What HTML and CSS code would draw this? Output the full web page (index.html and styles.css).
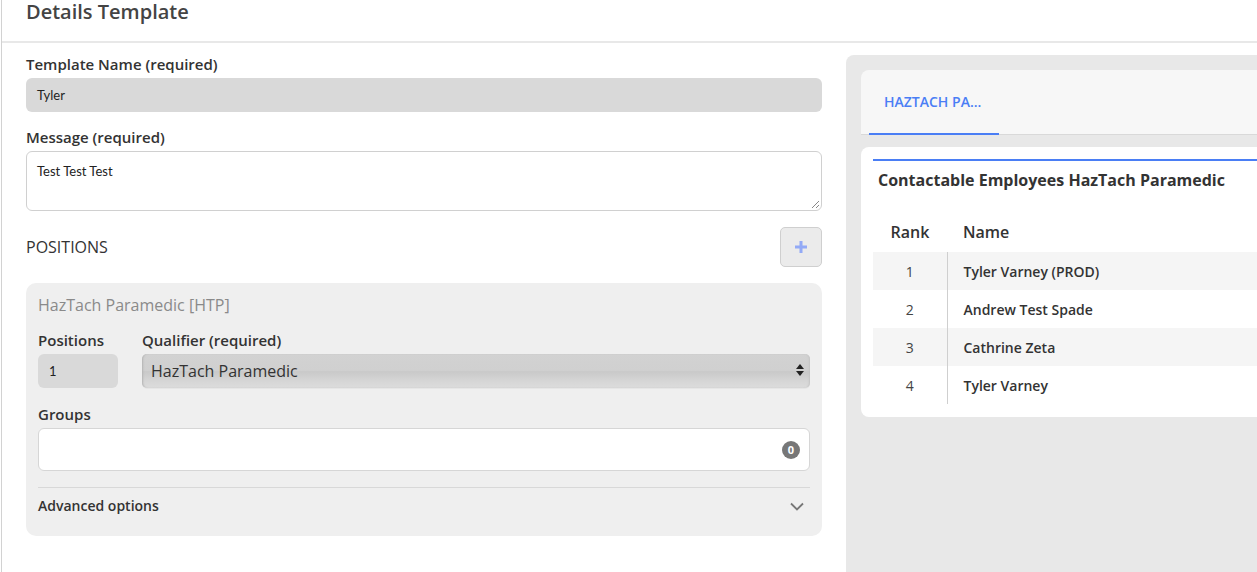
FILE: index.html
```html
<!DOCTYPE html>
<html>
<head>
<meta charset="utf-8">
<link rel="stylesheet" href="styles.css">
</head>
<body>
<div class="page">
  <div class="header"><h1 class="title">Details Template</h1></div>
  <div class="content">
    <div class="left">
      <div class="label">Template Name (required)</div>
      <div class="input filled">Tyler</div>
      <div class="label gap15">Message (required)</div>
      <div class="textarea">Test Test Test<span class="grip"></span></div>
      <div class="positions-row">
        <div class="section">POSITIONS</div>
        <div class="plus-btn">
          <svg width="14" height="14" viewBox="0 0 14 14"><path d="M7 1v12M1 7h12" stroke="#93aaf6" stroke-width="3" fill="none"/></svg>
        </div>
      </div>
      <div class="pos-card">
        <div class="pos-title">HazTach Paramedic [HTP]</div>
        <div class="pos-fields">
          <div class="f-pos">
            <div class="label">Positions</div>
            <div class="input filled small">1</div>
          </div>
          <div class="f-qual">
            <div class="label">Qualifier (required)</div>
            <div class="select">HazTach Paramedic<span class="arrows"><span class="up"></span><span class="down"></span></span></div>
          </div>
        </div>
        <div class="label gap16">Groups</div>
        <div class="groups"><span class="badge">0</span></div>
        <div class="divider"></div>
        <div class="adv">
          <span>Advanced options</span>
          <svg width="14" height="9" viewBox="0 0 14 9"><path d="M1 1.5l6 6 6-6" stroke="#777" stroke-width="1.8" fill="none"/></svg>
        </div>
      </div>
    </div>
    <div class="right">
      <div class="tabs">
        <div class="tab">HAZTACH PA...</div>
      </div>
      <div class="card">
        <div class="card-inner">
          <div class="card-title">Contactable Employees HazTach Paramedic</div>
          <table class="tbl">
            <thead><tr><th class="c-rank">Rank</th><th class="c-name">Name</th></tr></thead>
            <tbody>
              <tr class="odd"><td class="c-rank">1</td><td class="c-name">Tyler Varney (PROD)</td></tr>
              <tr><td class="c-rank">2</td><td class="c-name">Andrew Test Spade</td></tr>
              <tr class="odd"><td class="c-rank">3</td><td class="c-name">Cathrine Zeta</td></tr>
              <tr><td class="c-rank">4</td><td class="c-name">Tyler Varney</td></tr>
            </tbody>
          </table>
        </div>
      </div>
    </div>
  </div>
</div>
</body>
</html>
```
FILE: styles.css
```css
* { box-sizing: border-box; }
html, body { margin: 0; padding: 0; background: #fff; }
body {
  font-family: "Open Sans", "Noto Sans", sans-serif;
  color: #333;
  width: 1257px;
  height: 572px;
  overflow: hidden;
  padding-left: 1px;
}
.page {
  border-left: 1px solid #d2d2d2;
  height: 572px;
}
.header {
  height: 43px;
  border-bottom: 2px solid #e8e8e8;
  padding-left: 24px;
}
.title {
  margin: 0;
  font-size: 20px;
  line-height: 24px;
  font-weight: 600;
  color: #444;
}
.content {
  display: flex;
  gap: 24px;
  padding: 11px 0 0 24px;
}
.left { width: 796px; flex: none; }
.label {
  font-size: 15px;
  line-height: 20px;
  font-weight: 600;
  color: #333;
  margin-bottom: 4px;
}
.gap15 { margin-top: 15px; }
.gap16 { margin-top: 16px; }
.input {
  height: 34px;
  border-radius: 6px;
  padding: 0 11px;
  font-family: Lato, "Open Sans", sans-serif;
  font-size: 13px;
  line-height: 34px;
  color: #222;
}
.filled { background: #d9d9d9; }
.textarea {
  position: relative;
  height: 60px;
  border: 1px solid #d0d0d0;
  border-radius: 6px;
  padding: 11px 10px;
  font-family: Lato, "Open Sans", sans-serif;
  font-size: 13px;
  line-height: 16px;
  color: #222;
}
.grip {
  position: absolute;
  right: 2px;
  bottom: 2px;
  width: 7px;
  height: 7px;
  background: linear-gradient(135deg, transparent 45%, #888 45%, #888 55%, transparent 55%, transparent 75%, #888 75%, #888 85%, transparent 85%);
}
.positions-row {
  margin-top: 16px;
  display: flex;
  justify-content: space-between;
  align-items: center;
}
.section {
  font-size: 16px;
  line-height: 20px;
  color: #333;
}
.plus-btn {
  width: 42px;
  height: 40px;
  background: #ebebeb;
  border: 1px solid #cfcfcf;
  border-radius: 5px;
  display: flex;
  align-items: center;
  justify-content: center;
}
.pos-card {
  margin-top: 16px;
  background: #efefef;
  border-radius: 10px;
  padding: 12px 12px 20px;
}
.pos-title {
  font-size: 16px;
  line-height: 20px;
  color: #8a8a8a;
}
.pos-fields {
  margin-top: 15px;
  display: flex;
  gap: 24px;
}
.f-pos { width: 80px; flex: none; }
.f-qual { flex: 1; }
.small { padding: 0 11px; }
.select {
  position: relative;
  height: 34px;
  border-radius: 5px;
  padding: 0 9px;
  font-size: 16px;
  line-height: 34px;
  color: #333;
  background: linear-gradient(#d2d2d2 0%, #d0d0d0 48%, #c9c9c9 52%, #d6d6d6 80%, #dcdcdc 100%);
  box-shadow: inset 2px 0 2px -1px #b4b4b4, inset -2px 0 2px -1px #c4c4c4, 0 1px 0 #e6e6e6;
}
.arrows {
  position: absolute;
  right: 6px;
  top: 10px;
  width: 8px;
  display: flex;
  flex-direction: column;
  gap: 2px;
}
.up, .down {
  width: 0;
  height: 0;
  border-left: 4px solid transparent;
  border-right: 4px solid transparent;
}
.up { border-bottom: 5px solid #222; }
.down { border-top: 5px solid #222; }
.groups {
  position: relative;
  height: 43px;
  background: #fff;
  border: 1px solid #d6d6d6;
  border-radius: 6px;
  display: flex;
  align-items: center;
  justify-content: flex-end;
  padding-right: 9px;
}
.badge {
  width: 18px;
  height: 18px;
  border-radius: 50%;
  background: #777;
  color: #fff;
  font-size: 11px;
  font-weight: 700;
  line-height: 18px;
  text-align: center;
}
.divider {
  margin-top: 16px;
  border-top: 1px solid #d8d8d8;
}
.adv {
  margin-top: 8px;
  display: flex;
  justify-content: space-between;
  align-items: center;
  font-size: 14px;
  line-height: 20px;
  font-weight: 600;
  color: #333;
  padding-right: 6px;
}
.right {
  flex: none;
  width: 420px;
  height: 520px;
  background: #e8e8e8;
  border-top-left-radius: 8px;
  padding: 15px 0 0 15px;
  margin-top: 1px;
}
.tabs {
  height: 65px;
  background: #f7f7f7;
  border-top-left-radius: 8px;
  border-bottom: 1px solid #d9d9d9;
  padding-left: 8px;
  display: flex;
  align-items: flex-end;
}
.tab {
  width: 130px;
  height: 64px;
  padding-left: 15px;
  border-bottom: 2px solid #4a7ef5;
  margin-bottom: -1px;
  color: #4a7ef5;
  font-size: 14px;
  font-weight: 600;
  line-height: 62px;
}
.card {
  margin-top: 12px;
  background: #fff;
  border-top-left-radius: 8px;
  border-bottom-left-radius: 8px;
  height: 270px;
  padding: 12px 0 0 12px;
}
.card-inner {
  border-top: 2px solid #4a7ef5;
}
.card-title {
  padding: 9px 0 0 5px;
  font-size: 16px;
  line-height: 20px;
  font-weight: 700;
  color: #333;
}
.tbl {
  margin-top: 30px;
  border-collapse: collapse;
  width: 100%;
  font-size: 14px;
  color: #333;
}
.tbl th {
  font-size: 16px;
  font-weight: 600;
  height: 32px;
  line-height: 24px;
  padding: 0;
  text-align: left;
  vertical-align: top;
}
.tbl th.c-rank { text-align: center; }
.tbl td {
  height: 38px;
  padding: 0;
}
.tbl td.c-rank { color: #444; }
.c-rank { width: 74px; text-align: center; }
.tbl td.c-name {
  padding-left: 16px;
  font-weight: 600;
  border-left: 1px solid #cfcfcf;
}
.tbl th.c-name { padding-left: 16px; }
.odd td { background: #f5f5f5; }
```
